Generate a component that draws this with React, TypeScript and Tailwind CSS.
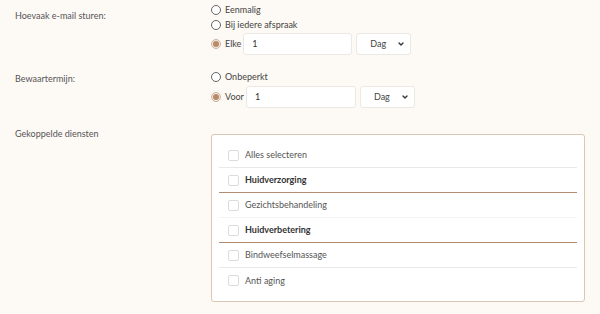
import { ChevronDown } from 'lucide-react';

function Radio({ checked, label }: { checked?: boolean; label: string }) {
  return (
    <label className="flex items-center gap-[4px] text-[9px] text-[#444]">
      {checked ? (
        <span className="w-[10px] h-[10px] rounded-full border border-[#c9b4a2] bg-[#f3e9df] flex items-center justify-center">
          <span className="w-[6px] h-[6px] rounded-full bg-[#b98a68]" />
        </span>
      ) : (
        <span className="w-[10px] h-[10px] rounded-full border border-[#666] bg-white" />
      )}
      <span>{label}</span>
    </label>
  );
}

function AmountRow({ label, inputW }: { label: string; inputW: string }) {
  return (
    <div className="flex items-center gap-[2px]">
      <Radio checked label={label} />
      <div className={`h-[22px] ${inputW} bg-white border border-[#ece8e4] rounded-[3px] flex items-center px-[8px] text-[9px] text-[#333]`}>
        1
      </div>
      <div className="ml-[2px] h-[22px] w-[55px] bg-white border border-[#ece8e4] rounded-[3px] flex items-center justify-between pl-[13px] pr-[5px] text-[9px] text-[#444]">
        <span>Dag</span>
        <ChevronDown className="w-[8px] h-[8px] text-[#333]" strokeWidth={4} />
      </div>
    </div>
  );
}

const services = [
  { name: 'Alles selecteren', bold: false, line: 'light' },
  { name: 'Huidverzorging', bold: true, line: 'brown' },
  { name: 'Gezichtsbehandeling', bold: false, line: 'faint' },
  { name: 'Huidverbetering', bold: true, line: 'brown' },
  { name: 'Bindweefselmassage', bold: false, line: 'light' },
  { name: 'Anti aging', bold: false, line: 'none' },
];

export default function App() {
  return (
    <div
      className="w-[600px] h-[314px] bg-[#fdf9f5] text-[#555] text-[9px] relative"
      style={{ fontFamily: 'Lato, "Noto Sans", sans-serif' }}
    >
      <div className="flex pt-[4px]">
        <div className="w-[211px] pl-[15px] pt-[5px]">Hoevaak e-mail sturen:</div>
        <div className="flex flex-col gap-[4px]">
          <div className="h-[11px] flex items-center"><Radio label="Eenmalig" /></div>
          <div className="h-[11px] flex items-center"><Radio label="Bij iedere afspraak" /></div>
          <div className="mt-[-1px]"><AmountRow label="Elke" inputW="w-[109px]" /></div>
        </div>
      </div>

      <div className="flex mt-[16px]">
        <div className="w-[211px] pl-[15px] pt-[1px]">Bewaartermijn:</div>
        <div className="flex flex-col gap-[4px]">
          <div className="h-[11px] flex items-center"><Radio label="Onbeperkt" /></div>
          <AmountRow label="Voor" inputW="w-[110px]" />
        </div>
      </div>

      <div className="flex mt-[26px]">
        <div className="w-[211px] pl-[15px] mt-[-7px]">Gekoppelde diensten</div>
        <div className="w-[374px] h-[168px] bg-white border border-[#d9c6b4] rounded-[3px] px-[7px] pt-[8px]">
          {services.map((s) => (
            <div
              key={s.name}
              className={`h-[25px] flex items-center pl-[9px] gap-[6px] ${
                s.line === 'light'
                  ? 'border-b border-[#ebe8e5]'
                  : s.line === 'brown'
                  ? 'border-b border-[#b08d72]'
                  : s.line === 'faint'
                  ? 'border-b border-[#f6f3f0]'
                  : ''
              }`}
            >
              <span className="w-[11px] h-[11px] border border-[#dcdcdc] rounded-[2px] bg-white" />
              <span className={s.bold ? 'font-bold text-[#333]' : 'text-[#555]'}>{s.name}</span>
            </div>
          ))}
        </div>
      </div>
    </div>
  );
}
